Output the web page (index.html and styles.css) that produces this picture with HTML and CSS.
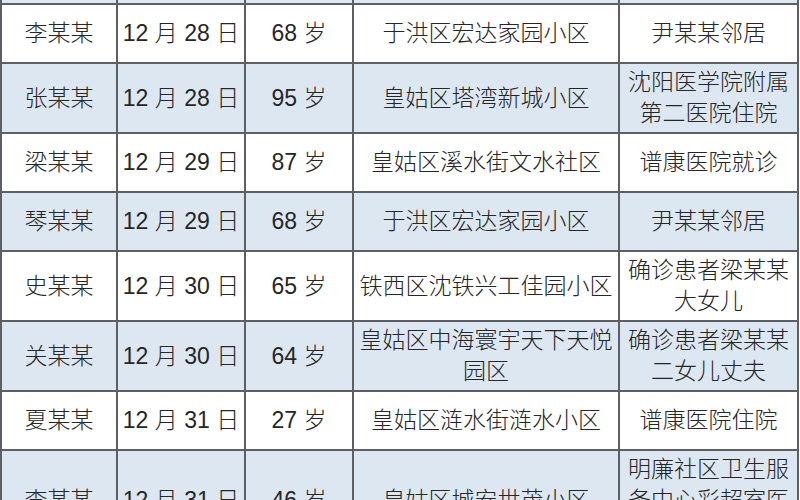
FILE: index.html
```html
<!DOCTYPE html>
<html lang="zh-CN">
<head>
<meta charset="utf-8">
<title>病例表</title>
<link rel="stylesheet" href="styles.css">
</head>
<body>
<div class="viewport">
<table class="cases">
  <colgroup>
    <col class="c-name"><col class="c-date"><col class="c-age"><col class="c-addr"><col class="c-note">
  </colgroup>
  <tbody>
    <tr class="alt lead"><td>&nbsp;</td><td>&nbsp;</td><td>&nbsp;</td><td>&nbsp;</td><td>&nbsp;</td></tr>
    <tr><td>李某某</td><td>12 月 28 日</td><td>68 岁</td><td>于洪区宏达家园小区</td><td>尹某某邻居</td></tr>
    <tr class="alt"><td>张某某</td><td>12 月 28 日</td><td>95 岁</td><td>皇姑区塔湾新城小区</td><td>沈阳医学院附属第二医院住院</td></tr>
    <tr><td>梁某某</td><td>12 月 29 日</td><td>87 岁</td><td>皇姑区溪水街文水社区</td><td>谱康医院就诊</td></tr>
    <tr class="alt"><td>琴某某</td><td>12 月 29 日</td><td>68 岁</td><td>于洪区宏达家园小区</td><td>尹某某邻居</td></tr>
    <tr><td>史某某</td><td>12 月 30 日</td><td>65 岁</td><td>铁西区沈铁兴工佳园小区</td><td>确诊患者梁某某大女儿</td></tr>
    <tr class="alt"><td>关某某</td><td>12 月 30 日</td><td>64 岁</td><td>皇姑区中海寰宇天下天悦园区</td><td>确诊患者梁某某二女儿丈夫</td></tr>
    <tr><td>夏某某</td><td>12 月 31 日</td><td>27 岁</td><td>皇姑区涟水街涟水小区</td><td>谱康医院住院</td></tr>
    <tr class="alt"><td>李某某</td><td>12 月 31 日</td><td>46 岁</td><td>皇姑区城安世茂小区</td><td>明廉社区卫生服务中心彩超室医生</td></tr>
  </tbody>
</table>
</div>
</body>
</html>
```

FILE: styles.css
```css
html, body {
  margin: 0;
  padding: 0;
  background: #ffffff;
}

.viewport {
  width: 800px;
  height: 500px;
  overflow: hidden;
}

.cases {
  border-collapse: collapse;
  table-layout: fixed;
  width: 797px;
  margin-top: -55px;
  margin-left: 0;
  font-family: "Liberation Sans", "Noto Sans CJK SC", sans-serif;
  font-size: 23px;
  font-weight: 300;
  line-height: 31px;
  color: #262626;
}

.c-name { width: 116px; }
.c-date { width: 128px; }
.c-age { width: 108px; }
.c-addr { width: 266px; }
.c-note { width: 179px; }

.cases td {
  border: 2px solid #5c5f63;
  padding: 3px 4px 3px;
  text-align: center;
  vertical-align: middle;
  height: 59px;
  box-sizing: border-box;
  background: #ffffff;
}

.cases tr.alt td {
  background: #dde7f2;
}

.cases tr.lead td {
  height: 58px;
}
```
